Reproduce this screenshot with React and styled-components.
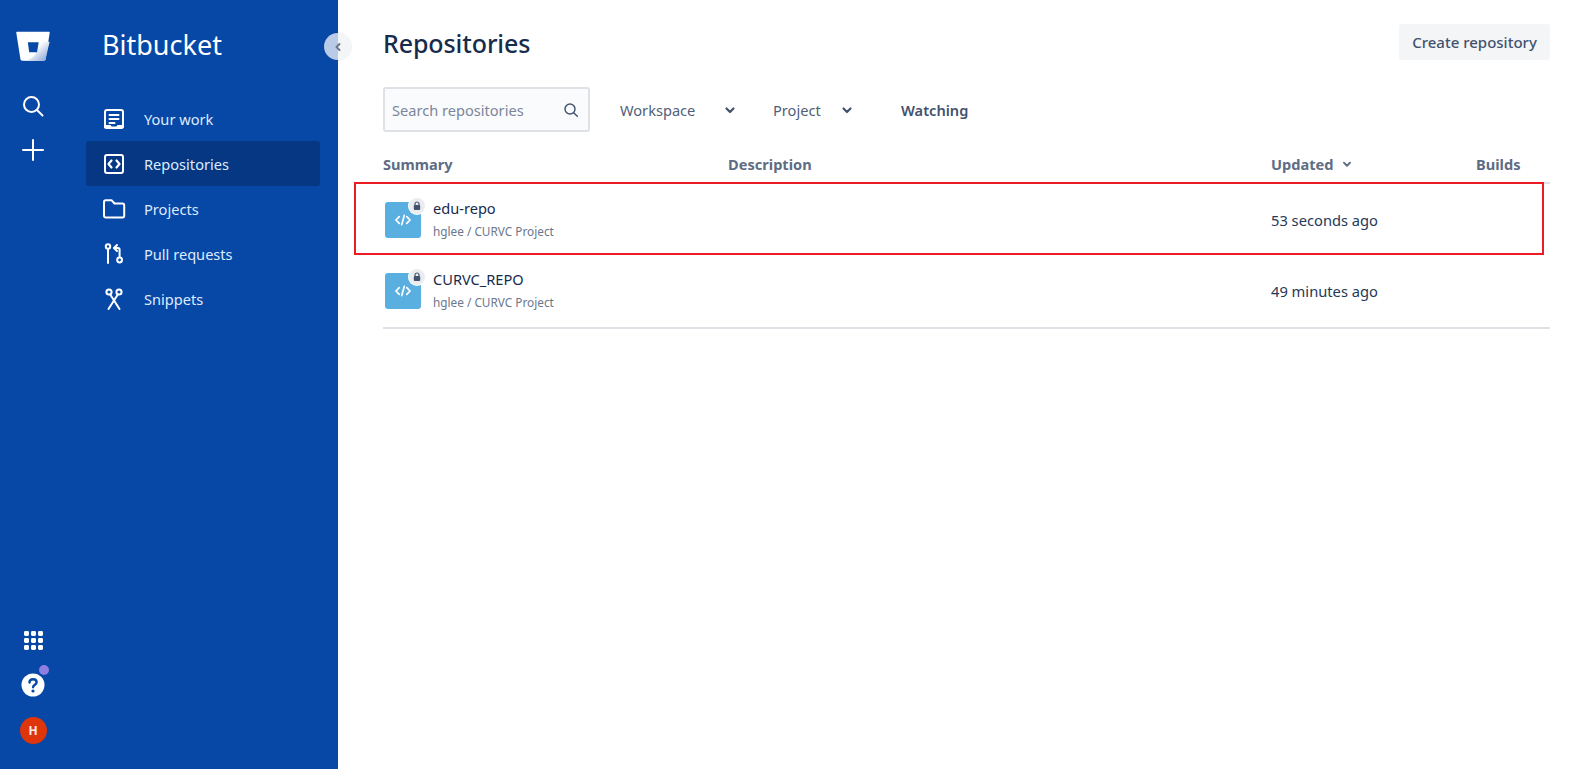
import React from "react";
import styled, { createGlobalStyle } from "styled-components";

const Global = createGlobalStyle`
  html, body { margin: 0; padding: 0; height: 100%; background: #fff; }
  body { font-family: "Noto Sans", "Open Sans", sans-serif; color: #172b4d; overflow: hidden; }
  * { box-sizing: border-box; }
`;

const Page = styled.div`
  display: flex;
  width: 1582px;
  height: 769px;
`;

const Side = styled.aside`
  position: relative;
  flex: 0 0 338px;
  display: flex;
  background: #0747a6;
  color: #fff;
`;

const Rail = styled.div`
  flex: 0 0 66px;
  display: flex;
  flex-direction: column;
  align-items: center;
  padding: 31px 0 25px;
`;

const RailTop = styled.div`
  display: flex;
  flex-direction: column;
  align-items: center;
  flex: 1;
`;

const RailBottom = styled.div`
  display: flex;
  flex-direction: column;
  align-items: center;
  gap: 19px;
`;

const RailButton = styled.div`
  position: relative;
  width: 26px;
  height: 26px;
  display: flex;
  align-items: center;
  justify-content: center;
  margin-top: ${(p) => p.$top || 0}px;
`;

const Dot = styled.span`
  position: absolute;
  top: -7px;
  right: -3px;
  width: 10px;
  height: 10px;
  border-radius: 50%;
  background: #8f7ee0;
`;

const Avatar = styled.div`
  width: 27px;
  height: 27px;
  border-radius: 50%;
  background: #de350b;
  color: #ffebe6;
  font-size: 12px;
  font-weight: 700;
  display: flex;
  align-items: center;
  justify-content: center;
`;

const Panel = styled.nav`
  flex: 1;
  padding: 0 18px 0 20px;
`;

const Brand = styled.div`
  font-size: 27px;
  line-height: 36px;
  padding: 27px 0 0 16px;
  margin-bottom: 33px;
`;

const NavItem = styled.div`
  height: 45px;
  display: flex;
  align-items: center;
  gap: 18px;
  padding-left: 16px;
  border-radius: 3px;
  font-size: 14.6px;
  color: #deebff;
  background: ${(p) => (p.$active ? "#053782" : "transparent")};
`;

const NavIcon = styled.span`
  width: 24px;
  height: 24px;
  display: flex;
  align-items: center;
  justify-content: center;
`;

const Collapse = styled.div`
  position: absolute;
  top: 33px;
  right: -13px;
  width: 27px;
  height: 27px;
  border-radius: 50%;
  background: linear-gradient(90deg, #b9cbe6 0 50%, #f4f5f7 50%);
  box-shadow: 0 0 0 1px rgba(9, 30, 66, 0.06);
  display: flex;
  align-items: center;
  justify-content: center;
`;

const Main = styled.main`
  flex: 1;
  padding: 24px 32px 0 45px;
`;

const Header = styled.header`
  display: flex;
  justify-content: space-between;
  align-items: flex-start;
  height: 63px;
`;

const Title = styled.h1`
  margin: 0;
  font-size: 25px;
  line-height: 38px;
  font-weight: 500;
  letter-spacing: -0.1px;
  color: #172b4d;
`;

const PrimaryButton = styled.button`
  width: 151px;
  height: 36px;
  border: 0;
  border-radius: 3px;
  background: #f4f5f7;
  color: #42526e;
  font: 500 15px "Noto Sans", sans-serif;
`;

const Filters = styled.div`
  display: flex;
  align-items: center;
  height: 45px;
`;

const Search = styled.div`
  width: 207px;
  height: 45px;
  display: flex;
  align-items: center;
  justify-content: space-between;
  padding: 0 9px 0 7px;
  border: 2px solid #dfe1e6;
  border-radius: 3px;
  background: #fafbfc;
  font-size: 14.6px;
  color: #7a869a;
`;

const Filter = styled.div`
  display: flex;
  align-items: center;
  justify-content: space-between;
  width: ${(p) => p.$w}px;
  margin-left: ${(p) => p.$ml}px;
  font-size: 14.6px;
  color: #505f79;
`;

const Watching = styled.div`
  margin-left: 46px;
  font-size: 14.6px;
  font-weight: 600;
  color: #42526e;
`;

const columns = "345px 1fr 205px 74px";

const HeadRow = styled.div`
  display: grid;
  grid-template-columns: ${columns};
  align-items: center;
  height: 38px;
  margin-top: 14px;
  padding-bottom: 1px;
  border-bottom: 2px solid #dfe1e6;
  font-size: 14.6px;
  font-weight: 700;
  color: #5e6c84;
`;

const HeadCell = styled.div`
  display: flex;
  align-items: center;
  gap: 6px;
`;

const Row = styled.div`
  position: relative;
  display: grid;
  grid-template-columns: ${columns};
  align-items: center;
  height: 71px;
`;

const Highlight = styled.div`
  position: absolute;
  left: -29px;
  right: 6px;
  top: -2px;
  bottom: 0;
  border: 2px solid #ed1c24;
  pointer-events: none;
`;

const Summary = styled.div`
  display: flex;
  align-items: center;
  gap: 12px;
  padding-left: 2px;
`;

const RepoIcon = styled.div`
  position: relative;
  width: 36px;
  height: 36px;
  border-radius: 3px;
  background: #5aafe1;
  display: flex;
  align-items: center;
  justify-content: center;
`;

const LockBadge = styled.span`
  position: absolute;
  top: -4px;
  right: -4px;
  width: 16px;
  height: 16px;
  border-radius: 50%;
  background: #ebecf0;
  box-shadow: 0 0 0 1px #fff;
  display: flex;
  align-items: center;
  justify-content: center;
`;

const Names = styled.div`
  display: flex;
  flex-direction: column;
  gap: 5px;
  padding-bottom: 2px;
`;

const RepoName = styled.div`
  font-size: 14.6px;
  line-height: 20px;
  color: #172b4d;
`;

const RepoPath = styled.div`
  font-size: 11.8px;
  line-height: 16px;
  color: #6b778c;
`;

const Updated = styled.div`
  grid-column: 3;
  font-size: 14.7px;
  color: #253858;
`;

const Footer = styled.div`
  height: 2px;
  margin-top: 1px;
  background: #dfe1e6;
`;

const Stroke = ({ children, size = 24, w = 2, color = "#fff" }) => (
  <svg width={size} height={size} viewBox="0 0 24 24" fill="none" stroke={color} strokeWidth={w} strokeLinecap="round" strokeLinejoin="round">
    {children}
  </svg>
);

const Logo = () => (
  <svg width="34" height="31" viewBox="0 0 36 32">
    <defs>
      <linearGradient id="lg" x1="1" y1="1" x2="0.35" y2="0.45">
        <stop offset="0" stopColor="#7d9bd0" />
        <stop offset="1" stopColor="#fff" />
      </linearGradient>
    </defs>
    <path d="M1 0.5h34c.5 0 .8.4.7.9L31.3 29.5c-.1.9-.8 1.5-1.7 1.5H6.4c-.9 0-1.5-.6-1.7-1.4L.3 1.4C.2.9.5.5 1 .5z" fill="#fff" />
    <path d="M35.6 11L31.3 29.5c-.1.9-.8 1.5-1.7 1.5H8c9-1 15-6 17-20z" fill="url(#lg)" />
    <path d="M12.5 11.5h11.5l-1.7 10.5h-8.3z" fill="#0747a6" />
  </svg>
);

const Code = ({ size = 20 }) => (
  <svg width={size} height={size} viewBox="0 0 24 24" fill="none" stroke="#fff" strokeWidth="2" strokeLinecap="round" strokeLinejoin="round">
    <path d="M7.5 8L3.5 12l4 4M16.5 8l4 4-4 4M13.5 6.5l-3 11" />
  </svg>
);

const Lock = () => (
  <svg width="10" height="10" viewBox="0 0 10 10">
    <path d="M3 4.2V3a2 2 0 014 0v1.2" fill="none" stroke="#42526e" strokeWidth="1.2" />
    <rect x="1.8" y="4" width="6.4" height="5" rx="1" fill="#42526e" />
  </svg>
);

const Chevron = ({ size = 16, color = "#42526e" }) => (
  <svg width={size} height={size} viewBox="0 0 16 16" fill="none" stroke={color} strokeWidth="2.2" strokeLinecap="round" strokeLinejoin="round">
    <path d="M4.5 6.5L8 10l3.5-3.5" />
  </svg>
);

const nav = [
  {
    label: "Your work",
    icon: (
      <Stroke>
        <rect x="3" y="3" width="18" height="18" rx="2" />
        <path d="M7.5 8h9M7.5 12h9M7.5 16h5" />
        <path d="M3 18.5h5.5l1 1.5h5l1-1.5H21V21H3z" fill="#fff" strokeWidth="1" />
      </Stroke>
    ),
  },
  {
    label: "Repositories",
    active: true,
    icon: (
      <Stroke>
        <rect x="3" y="3" width="18" height="18" rx="2" />
        <path d="M9.5 8.5L6.5 12l3 3.5M14.5 8.5l3 3.5-3 3.5" strokeWidth="2.2" />
      </Stroke>
    ),
  },
  {
    label: "Projects",
    icon: (
      <Stroke>
        <path d="M2 5c0-1 .7-1.8 1.7-1.8h5.8L12.5 6.5h8c1 0 1.7.7 1.7 1.7v10.6c0 1-.7 1.7-1.7 1.7H3.7C2.7 20.5 2 19.8 2 18.8z" />
      </Stroke>
    ),
  },
  {
    label: "Pull requests",
    icon: (
      <Stroke>
        <circle cx="6" cy="4.5" r="2.2" />
        <path d="M6 7v14" />
        <path d="M15 3l-3 3 3 3" />
        <path d="M12.5 6H16c1 0 1.6.7 1.6 1.6V15" />
        <circle cx="17.6" cy="18" r="2.4" />
      </Stroke>
    ),
  },
  {
    label: "Snippets",
    icon: (
      <Stroke>
        <circle cx="7" cy="5" r="2.6" />
        <circle cx="17" cy="5" r="2.6" />
        <path d="M8.2 7.5L17.5 22M15.8 7.5L6.5 22" />
      </Stroke>
    ),
  },
];

const repos = [
  { name: "edu-repo", time: "53 seconds ago", marked: true },
  { name: "CURVC_REPO", time: "49 minutes ago" },
];

export default function App() {
  return (
    <Page>
      <Global />
      <Side>
        <Rail>
          <RailTop>
            <Logo />
            <RailButton $top={31}>
              <Stroke size={24}>
                <circle cx="10.5" cy="10.5" r="7.5" />
                <path d="M16 16l5.5 5.5" />
              </Stroke>
            </RailButton>
            <RailButton $top={18}>
              <Stroke size={24}>
                <path d="M12 2v20M2 12h20" />
              </Stroke>
            </RailButton>
          </RailTop>
          <RailBottom>
            <RailButton>
              <svg width="20" height="20" viewBox="0 0 20 20" fill="#fff">
                {[1, 8, 15].flatMap((y) =>
                  [1, 8, 15].map((x) => <rect key={`${x}-${y}`} x={x} y={y} width="5" height="5" rx="1.4" />)
                )}
              </svg>
            </RailButton>
            <RailButton>
              <svg width="24" height="24" viewBox="0 0 24 24">
                <circle cx="12" cy="12" r="11.5" fill="#fff" />
                <path d="M8.5 9.5c0-2 1.5-3.3 3.6-3.3s3.5 1.2 3.5 3c0 2.6-3.3 2.6-3.5 5" fill="none" stroke="#0747a6" strokeWidth="2.4" strokeLinecap="round" />
                <circle cx="12" cy="18" r="1.6" fill="#0747a6" />
              </svg>
              <Dot />
            </RailButton>
            <Avatar>H</Avatar>
          </RailBottom>
        </Rail>
        <Panel>
          <Brand>Bitbucket</Brand>
          {nav.map((n) => (
            <NavItem key={n.label} $active={n.active}>
              <NavIcon>{n.icon}</NavIcon>
              {n.label}
            </NavItem>
          ))}
        </Panel>
        <Collapse>
          <svg width="12" height="12" viewBox="0 0 12 12" fill="none" stroke="#6b778c" strokeWidth="2" strokeLinecap="round" strokeLinejoin="round">
            <path d="M7.5 3L4.5 6l3 3" />
          </svg>
        </Collapse>
      </Side>
      <Main>
        <Header>
          <Title>Repositories</Title>
          <PrimaryButton>Create repository</PrimaryButton>
        </Header>
        <Filters>
          <Search>
            Search repositories
            <Stroke size={16} color="#42526e" w={2.2}>
              <circle cx="10.5" cy="10.5" r="7.5" />
              <path d="M16 16l5.5 5.5" />
            </Stroke>
          </Search>
          <Filter $w={118} $ml={30}>
            Workspace
            <Chevron />
          </Filter>
          <Filter $w={82} $ml={35}>
            Project
            <Chevron />
          </Filter>
          <Watching>Watching</Watching>
        </Filters>
        <HeadRow>
          <HeadCell>Summary</HeadCell>
          <HeadCell>Description</HeadCell>
          <HeadCell>
            Updated
            <Chevron size={14} color="#5e6c84" />
          </HeadCell>
          <HeadCell>Builds</HeadCell>
        </HeadRow>
        {repos.map((r) => (
          <Row key={r.name}>
            <Summary>
              <RepoIcon>
                <Code />
                <LockBadge>
                  <Lock />
                </LockBadge>
              </RepoIcon>
              <Names>
                <RepoName>{r.name}</RepoName>
                <RepoPath>hglee / CURVC Project</RepoPath>
              </Names>
            </Summary>
            <Updated>{r.time}</Updated>
            {r.marked && <Highlight />}
          </Row>
        ))}
        <Footer />
      </Main>
    </Page>
  );
}
